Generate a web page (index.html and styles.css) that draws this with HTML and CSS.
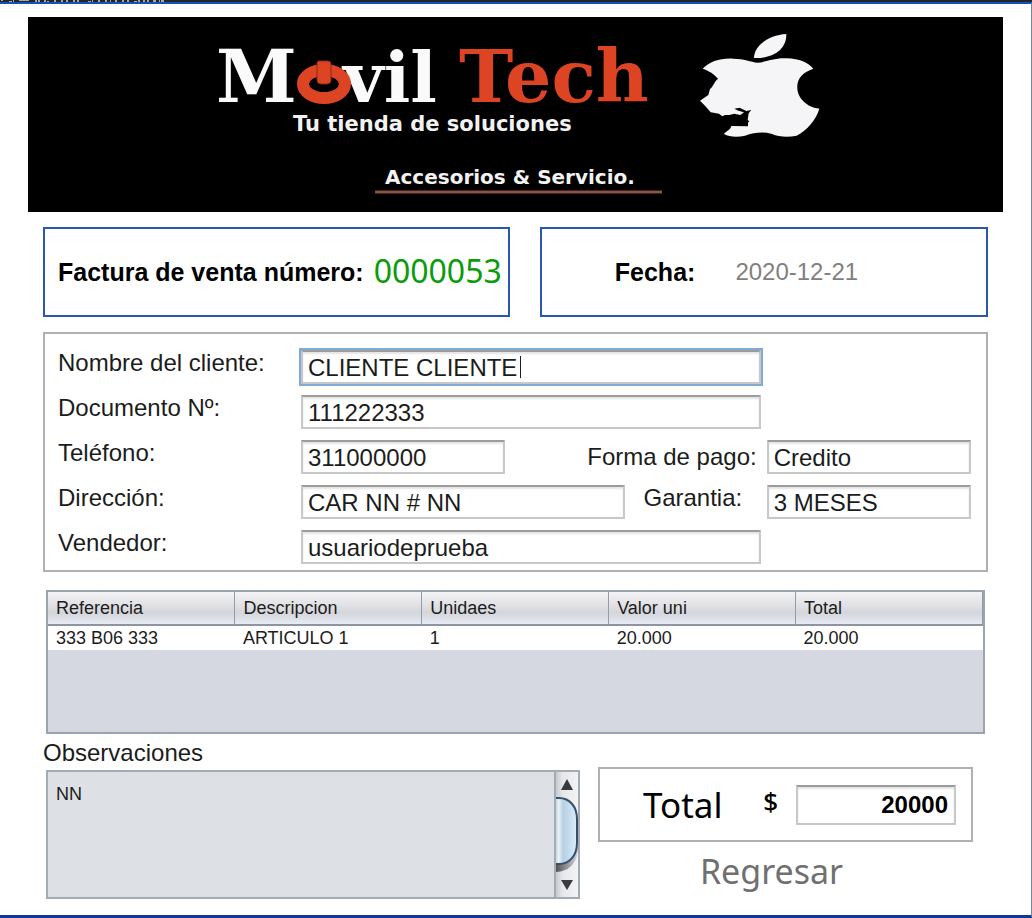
FILE: index.html
```html
<!DOCTYPE html>
<html lang="es">
<head>
<meta charset="utf-8">
<meta name="viewport" content="width=device-width, initial-scale=1">
<title>Movil Tech - Factura de venta</title>
<link rel="stylesheet" href="styles.css">
</head>
<body>
<div class="titlebar" aria-hidden="true">
  <svg width="170" height="2" viewBox="0 0 170 2"><path fill="#a4a7aa" d="M1 0h2v1H1zM9 1h3v1H9zM13 0h1v2h-1zM19 0h10v1H19zM35 0h2v2h-2zM38 0h2v2h-2zM44 0h2v2h-2zM47 1h2v1h-2zM54 0h2v2h-2zM61 0h2v2h-2zM66 0h2v2h-2zM73 0h2v2h-2zM77 0h2v2h-2zM88 1h3v1h-3zM92 0h1v2h-1zM98 0h2v2h-2zM105 0h2v2h-2zM110 0h1v2h-1zM115 0h2v2h-2zM122 0h2v2h-2zM127 0h2v2h-2zM134 1h3v1h-3zM138 0h2v2h-2zM143 0h2v2h-2zM147 0h2v2h-2zM153 0h3v2h-3zM159 0h1v2h-1zM161 0h3v2h-3z"/></svg>
</div>
<main class="sheet">
  <svg class="banner" viewBox="0 0 975 195" role="img" aria-label="Movil Tech, Tu tienda de soluciones">
    <rect width="975" height="195" fill="#000"/>
    <text class="brand brand-large" x="188" y="85">M</text>
    <text class="brand" x="315" y="85">vil</text>
    <ellipse cx="296" cy="67" rx="21" ry="14" fill="#000" stroke="#dc4424" stroke-width="12"/>
    <path fill="#dc4424" stroke="#8c2a16" d="M289 46q0-2 2-2h9q3 0 3 3v16q0 4-4 4h-6q-4 0-4-4z"/>
    <text class="brand brand-large brand-accent" x="431" y="85">Tech</text>
    <text class="tagline" x="265" y="114">Tu tienda de soluciones</text>
    <text class="services" x="357" y="167">Accesorios &amp; Servicio.</text>
    <path stroke="#8b5146" stroke-width="3" d="M347 175h287"/>
    <g transform="translate(642 3) scale(.3333)" fill="#f5f5f7">
      <path d="M252 114C252 78 295 45 349 42C350 85 315 116 252 114Z"/>
      <path d="M98 146C120 124 150 114 190 116C222 116 242 126 263 128C285 127 312 113 350 115C388 116 415 128 430 146C399 157 380 174 382 205C383 236 414 264 448 266C438 300 412 330 380 347C352 353 325 350 306 342C279 334 253 338 225 347C202 352 177 351 162 342C167 333 181 332 184 318L234 319V308L238 304L233 300L236 280L244 270L229 273L209 263L193 266L205 272L222 277L211 285L193 281L178 285H165L157 289L147 281L122 277C112 263 101 254 90 242L115 225L120 207C131 198 132 186 144 176C134 163 116 152 98 146Z"/>
    </g>
  </svg>

  <section class="summary">
    <div class="box box-blue">
      <span class="strong">Factura de venta número:</span>
      <output class="number">0000053</output>
    </div>
    <div class="box box-blue box-date">
      <span class="strong">Fecha:</span>
      <time class="date" datetime="2020-12-21">2020-12-21</time>
    </div>
  </section>

  <form class="client">
    <label for="nombre">Nombre del cliente:</label>
    <div class="wide focus-wrap">
      <input class="field field-focus" id="nombre" type="text" value="CLIENTE CLIENTE">
      <span class="caret"></span>
    </div>
    <label for="documento">Documento Nº:</label>
    <input class="field wide" id="documento" type="text" value="111222333">
    <label for="telefono">Teléfono:</label>
    <input class="field" id="telefono" type="text" value="311000000">
    <label class="label-pay" for="pago">Forma de pago:</label>
    <input class="field side" id="pago" type="text" value="Credito">
    <label for="direccion">Dirección:</label>
    <input class="field address" id="direccion" type="text" value="CAR NN # NN">
    <label class="label-warranty" for="garantia">Garantia:</label>
    <input class="field side" id="garantia" type="text" value="3 MESES">
    <label for="vendedor">Vendedor:</label>
    <input class="field wide" id="vendedor" type="text" value="usuariodeprueba">
  </form>

  <div class="items">
    <table>
      <thead>
        <tr><th>Referencia</th><th>Descripcion</th><th>Unidaes</th><th>Valor uni</th><th>Total</th></tr>
      </thead>
      <tbody>
        <tr><td>333 B06 333</td><td>ARTICULO 1</td><td>1</td><td>20.000</td><td>20.000</td></tr>
      </tbody>
    </table>
  </div>

  <section class="footer">
    <div class="notes">
      <label for="observaciones">Observaciones</label>
      <div class="notes-box">
        <textarea id="observaciones">NN</textarea>
        <svg class="scrollbar" width="22" height="125" viewBox="0 0 22 125" aria-hidden="true">
          <defs>
            <linearGradient id="track"><stop offset="0" stop-color="#c9cbcf"/><stop offset=".3" stop-color="#e6e7ea"/><stop offset="1" stop-color="#f3f3f5"/></linearGradient>
            <linearGradient id="thumb"><stop offset="0" stop-color="#a9c0d2"/><stop offset=".2" stop-color="#e9f1f7"/><stop offset=".4" stop-color="#b7cfe2"/><stop offset=".75" stop-color="#c9e1f3"/><stop offset="1" stop-color="#dceefa"/></linearGradient>
            <linearGradient id="shade"><stop offset="0" stop-color="#55565a"/><stop offset="1" stop-color="#d3d4d8"/></linearGradient>
          </defs>
          <path fill="url(#track)" d="M0 0h22v125H0z"/>
          <path fill="url(#shade)" d="M0 89h10q10-4 12-18v8q-3 20-22 21z"/>
          <path fill="url(#thumb)" stroke="#36506a" stroke-width="2" d="M-2 26H3C14 26 21 35 21 47V71C21 84 13 92 3 92H-2z"/>
          <path fill="#3a3b3f" d="M11 7l6 11H5zM11 118l6-10H5z"/>
        </svg>
      </div>
    </div>
    <div class="closing">
      <div class="box total">
        <label class="total-label" for="total">Total</label>
        <span class="currency">$</span>
        <input class="field total-field" id="total" type="text" value="20000">
      </div>
      <button class="back" type="button">Regresar</button>
    </div>
  </section>
</main>
</body>
</html>
```
FILE: styles.css
```css
* {
  box-sizing: border-box;
}

body {
  display: flex;
  flex-direction: column;
  min-height: 100vh;
  margin: 0;
  background: #fff;
  color: #1c1c1c;
  font: 24px/26px "Liberation Sans", Arial, sans-serif;
}

.titlebar {
  height: 2px;
  background: #23272b;
}

.titlebar svg {
  display: block;
}

.sheet {
  flex: 1;
  padding: 13px 28px 14px;
  border-top: 2px solid #1650b8;
  border-right: 1px solid #7088b0;
  border-bottom: 3px solid #0b3a94;
}

.banner {
  display: block;
  width: 100%;
  height: auto;
}

.brand {
  fill: #fafafa;
  font: bold 70px "DejaVu Serif", serif;
}

.brand-large {
  font-size: 73px;
}

.brand-accent {
  fill: #dc4424;
}

.tagline,
.services {
  fill: #f2f2f2;
  font: bold 21px "DejaVu Sans", sans-serif;
}

.services {
  font-size: 20px;
}

.summary {
  display: grid;
  grid-template-columns: 465fr 450fr;
  gap: 30px;
  margin: 15px 15px 0;
}

.box {
  display: flex;
  align-items: center;
  border: 2px solid #b0b0b0;
}

.box-blue {
  min-height: 90px;
  gap: 10px;
  padding: 0 6px 0 13px;
  border-color: #2c57b0;
  white-space: nowrap;
}

.box-date {
  gap: 40px;
  padding-left: 73px;
}

.strong {
  color: #000;
  font-size: 25px;
  font-weight: bold;
}

.number {
  padding-bottom: 2px;
  color: #0a9c0a;
  font: 32px/36px "Noto Sans", sans-serif;
}

.date {
  color: #808080;
}

.client {
  display: grid;
  grid-template-columns: 243px minmax(0, 204fr) minmax(0, 120fr) minmax(0, 135fr) minmax(0, 6fr) minmax(0, 204fr);
  grid-auto-rows: 34px;
  row-gap: 11px;
  margin: 15px 15px 0;
  padding: 16px 15px 6px 13px;
  border: 2px solid #b0b0b0;
  white-space: nowrap;
}

.client > label {
  grid-column: 1;
}

.field {
  width: 100%;
  min-width: 0;
  height: 34px;
  padding: 1px 5px 0;
  border: 2px solid #c8c8c8;
  border-top-color: #9c9c9c;
  border-radius: 0;
  background: #fff;
  box-shadow: inset 0 2px 2px #e4e4e4;
  color: #1c1c1c;
  font: inherit;
  outline: 0;
}

.field-focus {
  box-shadow: inset 0 2px 2px #e4e4e4, 0 0 0 2px #7fabd6;
}

.wide {
  grid-column: 2 / 5;
}

.address {
  grid-column: 2 / 4;
}

.side {
  grid-column: 6 / 7;
}

.focus-wrap {
  position: relative;
}

.caret {
  position: absolute;
  top: 6px;
  left: 219px;
  width: 1px;
  height: 22px;
  background: #1c1c1c;
}

.client > .label-pay {
  grid-column: 3 / 6;
  align-self: center;
  padding-right: 10px;
  text-align: right;
}

.client > .label-warranty {
  grid-column: 4 / 6;
  padding-left: 18px;
}

.items {
  min-height: 144px;
  margin: 18px 18px 0;
  border: 2px solid #9ba2b0;
  background: #d5d8e0;
}

table {
  width: 100%;
  border-collapse: collapse;
  table-layout: fixed;
  font-size: 18px;
  line-height: 20px;
}

th,
td {
  padding: 2px 8px;
  text-align: left;
  font-weight: normal;
}

th {
  height: 33px;
  border-right: 1px solid #959ba8;
  border-bottom: 2px solid #8e94a2;
  background: linear-gradient(#f4f4f6, #dcdde1 50%, #d3d5da 65%, #e6eaf3);
}

td {
  background: #fff;
}

.footer {
  display: grid;
  grid-template-columns: 534fr 375fr;
  gap: 18px;
  margin: 6px 30px 0 18px;
}

.notes {
  display: flex;
  flex-direction: column;
}

.notes > label {
  margin-left: -3px;
  padding-bottom: 4px;
}

.notes-box {
  display: flex;
  border: 2px solid #a3abb5;
}

.notes-box textarea {
  flex: 1;
  min-width: 0;
  height: 125px;
  padding: 12px 8px;
  border: 0;
  border-right: 2px solid #a3abb5;
  background: #dde0e5;
  color: #1c1c1c;
  font: 18px/20px "Liberation Sans", Arial, sans-serif;
  outline: 0;
  overflow: hidden;
  resize: none;
}

.scrollbar {
  flex: none;
}

.closing {
  display: flex;
  flex-direction: column;
  align-items: center;
  gap: 6px;
  padding-top: 27px;
}

.total {
  width: 100%;
  min-height: 75px;
  padding: 0 15px 0 43px;
}

.total-label {
  flex: 1;
  color: #000;
  font: 35px/40px "Noto Sans", sans-serif;
}

.currency {
  padding: 0 18px 8px 0;
  color: #000;
  font: 500 26px/30px "Noto Sans", sans-serif;
}

.total-field {
  flex: none;
  width: 160px;
  height: 40px;
  padding: 0 6px;
  color: #000;
  font-weight: bold;
  text-align: right;
}

.back {
  padding: 0 28px 0 0;
  border: 0;
  background: none;
  color: #707070;
  font: 34px/46px "Noto Sans", sans-serif;
}
```
